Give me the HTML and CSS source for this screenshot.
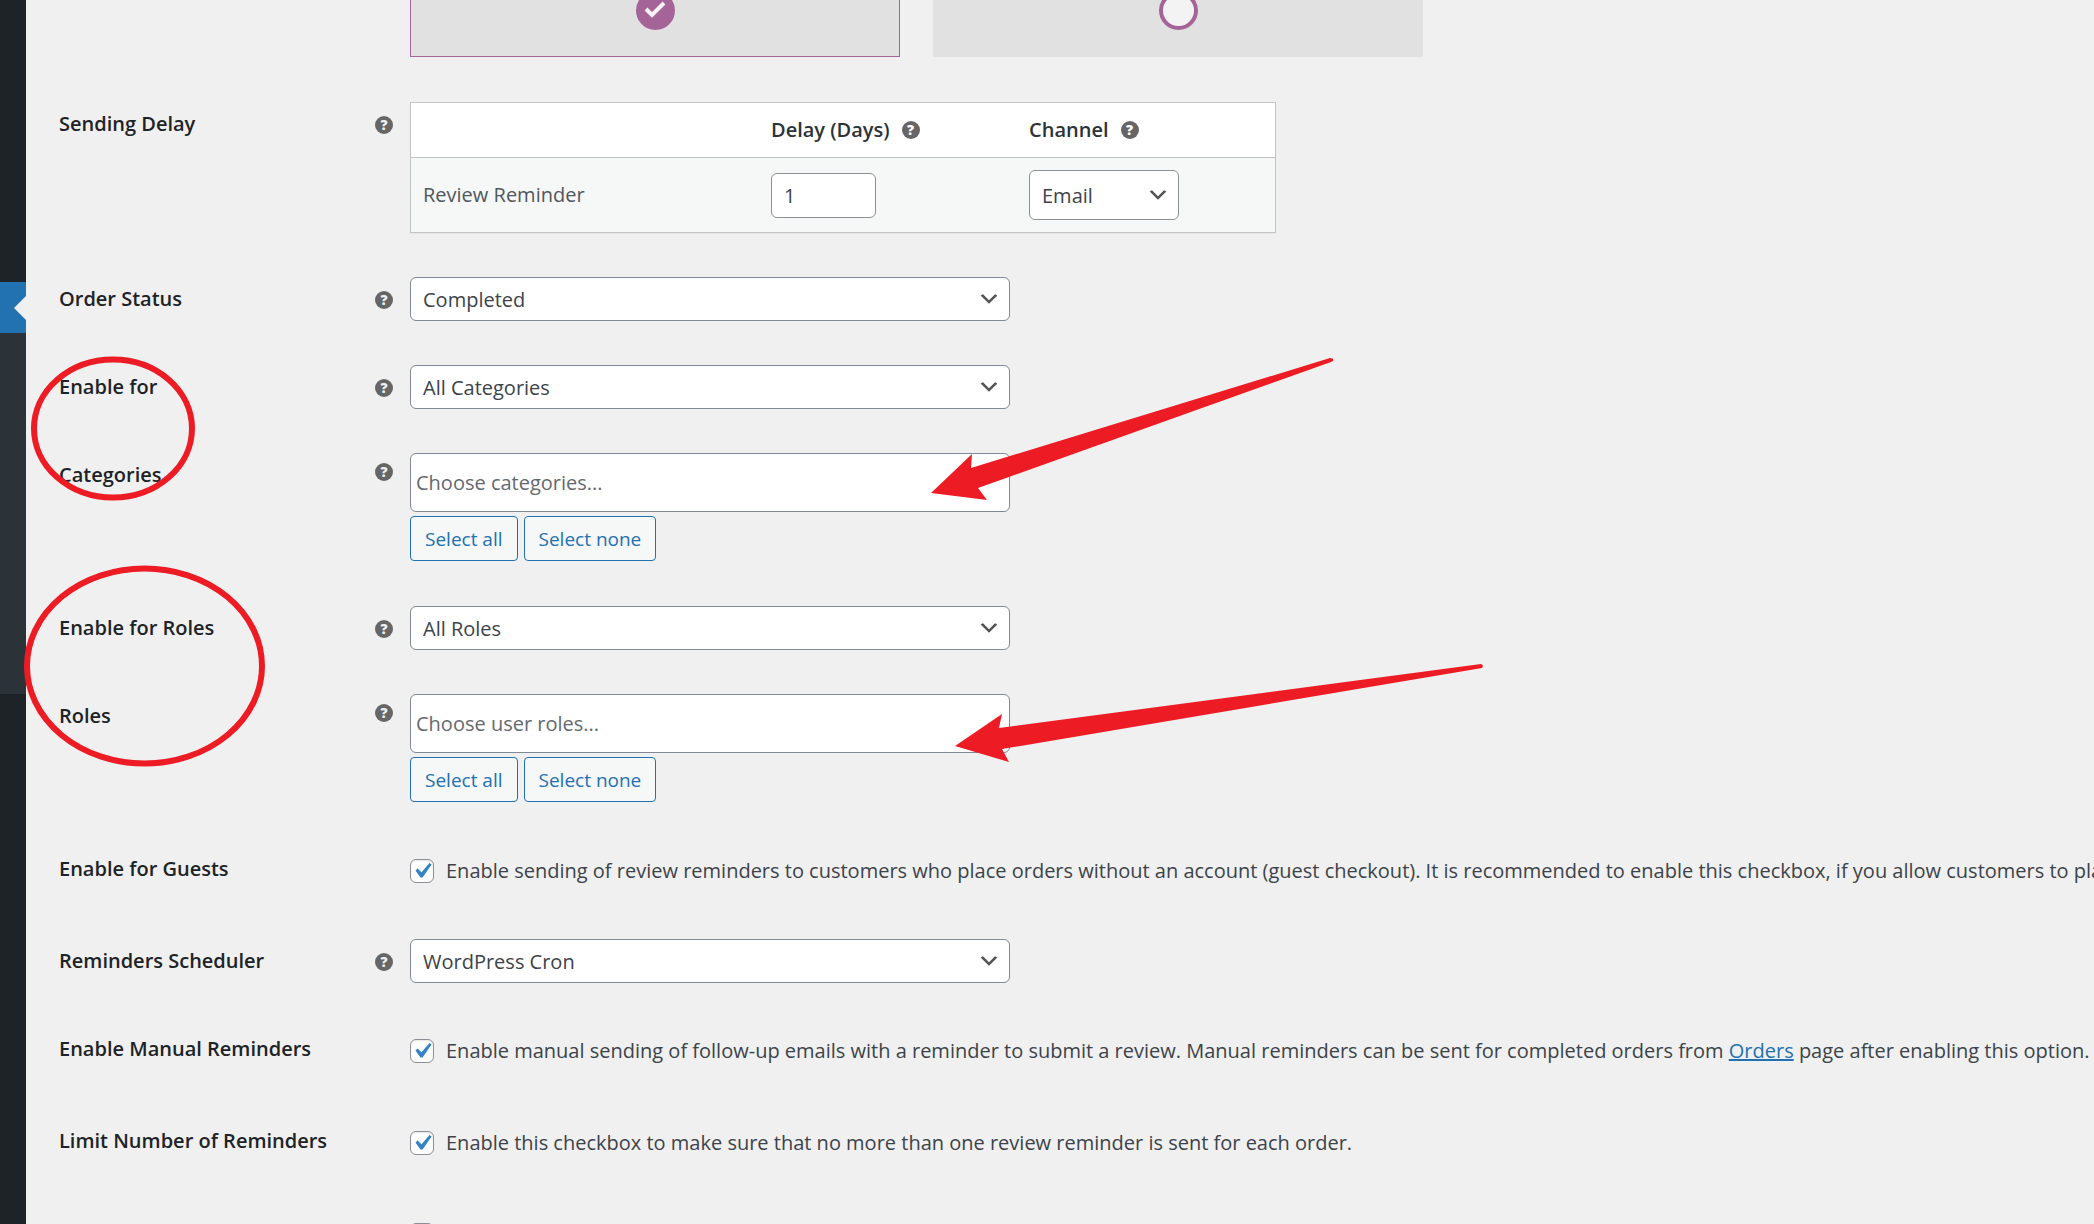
FILE: index.html
```html
<!DOCTYPE html>
<html lang="en">
<head>
  <meta charset="UTF-8">
  <meta name="viewport" content="width=device-width, initial-scale=1.0">
  <title>Review Reminder Settings</title>
  <link rel="stylesheet" href="styles.css">
</head>
<body>
  <nav class="menu">
    <div class="menu-top"></div>
    <div class="menu-current"></div>
    <div class="menu-sub"></div>
  </nav>

  <main>
    <form class="settings">
      <div class="row row-cards">
        <div class="cards">
          <label class="card card-active"><input type="radio" name="mailer" checked></label>
          <label class="card"><input type="radio" name="mailer"></label>
        </div>
      </div>

      <div class="row">
        <span class="title">Sending Delay</span>
        <span class="help">?</span>
        <div class="field">
          <table class="delay">
            <thead>
              <tr>
                <th class="col-name"></th>
                <th class="col-delay"><div class="th-inner">Delay (Days) <span class="help">?</span></div></th>
                <th><div class="th-inner">Channel <span class="help">?</span></div></th>
              </tr>
            </thead>
            <tbody>
              <tr>
                <td><label for="delay">Review Reminder</label></td>
                <td><input class="number" type="text" id="delay" value="1"></td>
                <td>
                  <select class="channel" id="channel">
                    <option>Email</option>
                  </select>
                </td>
              </tr>
            </tbody>
          </table>
        </div>
      </div>

      <div class="row">
        <label class="title" for="status">Order Status</label>
        <span class="help">?</span>
        <div class="field">
          <select class="wide" id="status"><option>Completed</option></select>
        </div>
      </div>

      <div class="row">
        <label class="title" for="enableFor">Enable for</label>
        <span class="help">?</span>
        <div class="field">
          <select class="wide" id="enableFor"><option>All Categories</option></select>
        </div>
      </div>

      <div class="row row-multi">
        <label class="title" for="categories">Categories</label>
        <span class="help">?</span>
        <div class="field">
          <input class="multi" type="text" id="categories" placeholder="Choose categories...">
          <div class="buttons">
            <button type="button">Select all</button>
            <button type="button">Select none</button>
          </div>
        </div>
      </div>

      <div class="row">
        <label class="title" for="enableRoles">Enable for Roles</label>
        <span class="help">?</span>
        <div class="field">
          <select class="wide" id="enableRoles"><option>All Roles</option></select>
        </div>
      </div>

      <div class="row row-multi">
        <label class="title" for="roles">Roles</label>
        <span class="help">?</span>
        <div class="field">
          <input class="multi" type="text" id="roles" placeholder="Choose user roles...">
          <div class="buttons">
            <button type="button">Select all</button>
            <button type="button">Select none</button>
          </div>
        </div>
      </div>

      <div class="row">
        <span class="title">Enable for Guests</span>
        <div class="field check">
          <input type="checkbox" id="guests" checked>
          <label for="guests">Enable sending of review reminders to customers who place orders without an account (guest checkout). It is recommended to enable this checkbox, if you allow customers to pla</label>
        </div>
      </div>

      <div class="row">
        <label class="title" for="scheduler">Reminders Scheduler</label>
        <span class="help">?</span>
        <div class="field">
          <select class="wide" id="scheduler"><option>WordPress Cron</option></select>
        </div>
      </div>

      <div class="row">
        <span class="title">Enable Manual Reminders</span>
        <div class="field check">
          <input type="checkbox" id="manual" checked>
          <label for="manual">Enable manual sending of follow-up emails with a reminder to submit a review. Manual reminders can be sent for completed orders from <a href="#">Orders</a> page after enabling this option.</label>
        </div>
      </div>

      <div class="row">
        <span class="title">Limit Number of Reminders</span>
        <div class="field check">
          <input type="checkbox" id="limit" checked>
          <label for="limit">Enable this checkbox to make sure that no more than one review reminder is sent for each order.</label>
        </div>
      </div>

      <div class="row">
        <div class="field check">
          <input type="checkbox" id="next">
        </div>
      </div>
    </form>
  </main>

  <!-- red marks over the form -->
  <svg class="marks" width="1500" height="800" viewBox="0 0 1500 800">
    <g fill="none" stroke="#ed1c24" stroke-width="6">
      <ellipse cx="113" cy="428.5" rx="79" ry="69"/>
      <ellipse cx="144.500" cy="666" rx="117.500" ry="97.500"/>
    </g>
    <g fill="#ed1c24">
      <path d="M931 493L972 454L971 468L1330 358Q1334 358 1333 361L1331 362L978 488L987 500Z"/>
      <path d="M955 746L1002 714L999 728L1481 664Q1484 665 1482 668L1002 749L1009 762Z"/>
    </g>
  </svg>
</body>
</html>
```

FILE: styles.css
```css
* { box-sizing: border-box; }
body { margin: 0; height: 100vh; display: flex; overflow: hidden; background: #f0f0f0; color: #3c434a; font-family: "Open Sans", "Noto Sans", sans-serif; font-size: 20px; line-height: 28px; }
input, select, button { margin: 0; font: inherit; color: #3c434a; }

.menu { width: 26px; flex: none; background: #1d2327; }
.menu-top { height: 282px; }
.menu-current { height: 51px; background: #2271b1; display: flex; align-items: center; justify-content: flex-end; }
.menu-current::after { content: ""; border: 12px solid transparent; border-left: 0; border-right-color: #f0f0f0; }
.menu-sub { height: 361px; background: #2c3338; }

main { flex: 1; min-width: 0; overflow: hidden; }
/* the form is scrolled a little under the top edge */
.settings { margin-top: -43px; padding-left: 33px; }
.row { display: grid; grid-template-columns: 316px 18px 1fr; column-gap: 0; padding: 22px 0; }
.row-cards { padding-top: 0; padding-bottom: 23px; }
.row-multi { padding-bottom: 23px; }
.title { grid-column: 1; padding-top: 8px; font-weight: 600; color: #1d2327; }
.field, .cards { grid-column: 3; min-width: 0; padding-left: 17px; }

.help { width: 18px; height: 18px; border-radius: 50%; background: #666; color: #f0f0f0; font-size: 14px; font-weight: 800; line-height: 18px; text-align: center; }
.row > .help { margin-top: 14px; }
.row-multi > .help { margin-top: 10px; }

.cards { display: flex; gap: 33px; }
.card { width: 490px; height: 100px; padding-bottom: 26px; border: 1px solid #e1e1e1; background: #e1e1e1; display: flex; align-items: flex-end; justify-content: center; }
.card-active { border-color: #a46497; }
.card input { appearance: none; width: 39px; height: 39px; border: 4px solid #a46497; border-radius: 50%; background: #f3f3f3; }
.card input:checked { background: #a46497 url("data:image/svg+xml,%3Csvg xmlns='http://www.w3.org/2000/svg' viewBox='0 0 31 31'%3E%3Cpath d='M6 14l6 6L24 8' fill='none' stroke='%23f3f3f3' stroke-width='4'/%3E%3C/svg%3E") center / 31px no-repeat; }

.delay { width: 866px; table-layout: fixed; border-collapse: separate; border-spacing: 0; border: 1px solid #c3c4c7; background: #fff; box-shadow: 0 1px 1px rgba(0,0,0,0.04); }
.delay th { height: 54px; padding: 0 12px; font-weight: 600; text-align: left; color: #2c3338; }
.delay td { height: 75px; padding: 0 12px; border-top: 1px solid #c3c4c7; background: #f6f7f7; color: #50575e; }
.col-name { width: 348px; }
.col-delay { width: 258px; }
.th-inner { display: flex; align-items: center; gap: 12px; }
.th-inner .help { color: #fff; }

.number { display: block; width: 105px; height: 45px; padding: 0 12px; border: 1px solid #8c8f94; border-radius: 6px; background: #fff; }
select { display: block; appearance: none; border: 1px solid #7e8993; border-radius: 6px; padding: 2px 36px 0 12px; background: #fff url("data:image/svg+xml,%3Csvg xmlns='http://www.w3.org/2000/svg' viewBox='0 0 20 20'%3E%3Cpath d='M5 6l5 5 5-5 2 1-7 7-7-7 2-1z' fill='%23555'/%3E%3C/svg%3E") right 8px center / 24px no-repeat; }
.wide { width: 600px; height: 44px; }
.channel { width: 150px; height: 50px; border-color: #8c8f94; }
.multi { display: block; width: 600px; height: 59px; padding: 0 5px; border: 1px solid #7e8993; border-radius: 6px; background: #fff; }
.multi::placeholder { color: #646970; opacity: 1; }

.buttons { display: flex; gap: 6px; margin-top: 4px; }
.buttons button { height: 45px; padding: 0 14px; border: 1px solid #2271b1; border-radius: 4px; background: #f6f7f7; color: #2271b1; font-size: 19px; }

.check { display: flex; align-items: center; gap: 12px; height: 48px; white-space: nowrap; }
.check input { appearance: none; flex: none; width: 24px; height: 24px; border: 1px solid #8c8f94; border-radius: 6px; background: #fff; box-shadow: inset 0 1px 2px rgba(0,0,0,0.1); }
.check input:checked { background: #fff url("data:image/svg+xml,%3Csvg xmlns='http://www.w3.org/2000/svg' viewBox='0 0 20 20'%3E%3Cpath d='M14.83 4.89l1.34.94-5.81 8.38H9.02L5.78 9.67l1.34-1.25 2.57 2.4z' fill='%233582c4'/%3E%3C/svg%3E") center / 31px no-repeat; }
.check a { color: #2271b1; }

.marks { position: absolute; left: 0; top: 0; pointer-events: none; }
```
